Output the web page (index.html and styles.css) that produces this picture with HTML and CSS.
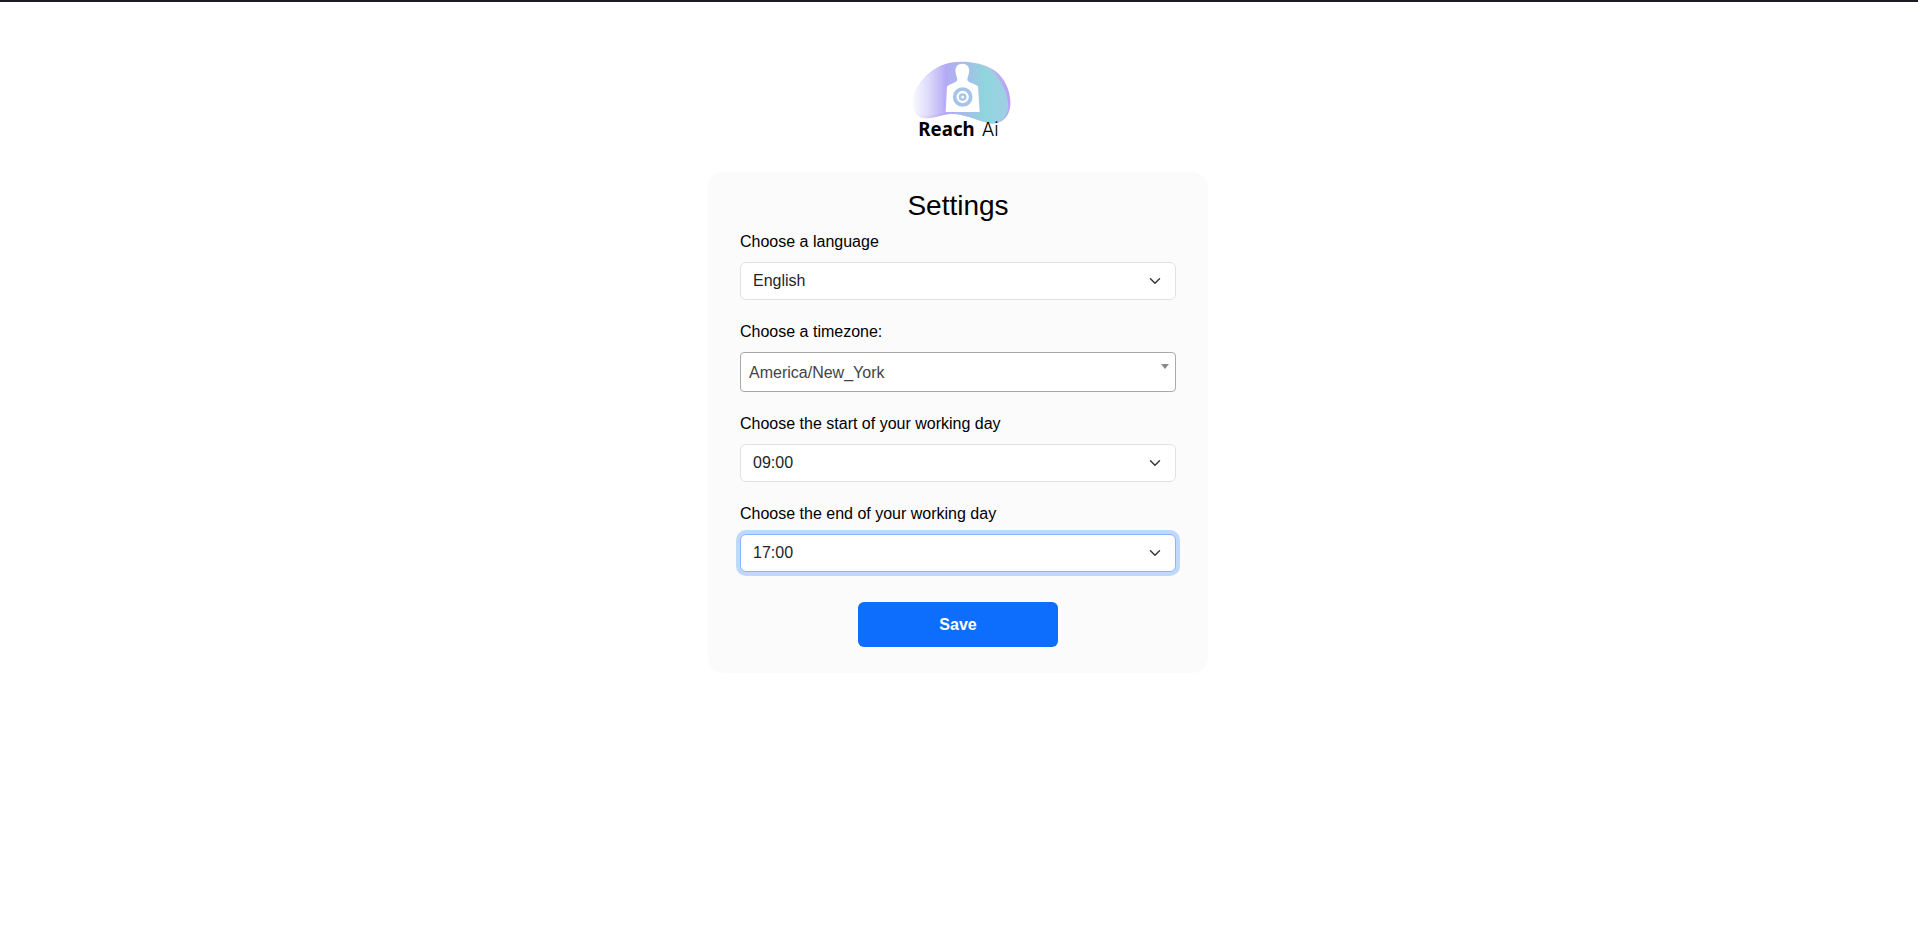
FILE: index.html
```
<!DOCTYPE html>
<html lang="en">
<head>
    <meta charset="UTF-8">
    <meta name="viewport" content="width=device-width, initial-scale=1.0">
    <title>Settings</title>
    <link rel="stylesheet" href="styles.css">
</head>
<body>
    <header class="header">
        <svg class="logo" viewBox="12 33 324 240" role="img" aria-label="Reach Ai">
            <defs>
                <linearGradient id="back" x1="0" y1="0" x2="1" y2="0">
                    <stop offset="0" stop-color="#fbfaff"/>
                    <stop offset="0.32" stop-color="#b3a5f3"/>
                    <stop offset="0.7" stop-color="#a9d0e4"/>
                    <stop offset="1" stop-color="#bd9bf8"/>
                </linearGradient>
                <linearGradient id="front" x1="0" y1="0" x2="1" y2="0">
                    <stop offset="0" stop-color="#f7f7fe"/>
                    <stop offset="0.15" stop-color="#dedcfb"/>
                    <stop offset="0.34" stop-color="#b5aaf4"/>
                    <stop offset="0.55" stop-color="#a5bee8"/>
                    <stop offset="0.75" stop-color="#90d5dc"/>
                    <stop offset="1" stop-color="#9fcfe4"/>
                </linearGradient>
            </defs>
            <path fill="url(#back)" d="M38 160C38 110 90 50 150 38C195 31 245 36 285 62C318 86 333 130 331 165C328 200 308 218 284 220C240 215 200 190 150 192C115 196 95 208 70 205C48 200 38 182 38 160Z"/>
            <path fill="url(#front)" d="M42 158C44 110 92 52 150 40C195 33 235 38 268 58C302 84 326 130 325 172C322 202 302 222 276 221C235 216 205 194 150 190C110 189 92 202 66 196C48 189 41 176 42 158Z"/>
            <path fill="#fff" d="M187 41C203 41 210 54 207 68C206 76 202 82 202 88C202 98 220 100 234 109L239 186H137L141 109C155 100 172 98 172 88C172 82 168 76 167 68C164 54 171 41 187 41Z"/>
            <circle cx="188" cy="141" r="24" fill="none" stroke="#a5c4e8" stroke-width="11"/>
            <circle cx="188" cy="141" r="8" fill="none" stroke="#a5c4e8" stroke-width="7"/>
            <text class="logo-bold" x="55" y="259">Reach</text>
            <text class="logo-light" x="245" y="259">Ai</text>
        </svg>
    </header>
    <main class="card">
        <h1>Settings</h1>
        <form>
            <label for="language">Choose a language</label>
            <select class="form-select" id="language" name="language">
                <option>English</option>
            </select>

            <label for="timezone">Choose a timezone:</label>
            <select class="timezone-select" id="timezone" name="timezone">
                <option>America/New_York</option>
            </select>

            <label for="start">Choose the start of your working day</label>
            <select class="form-select" id="start" name="start">
                <option>08:00</option>
                <option selected>09:00</option>
                <option>10:00</option>
            </select>

            <label for="end">Choose the end of your working day</label>
            <select class="form-select" id="end" name="end" autofocus>
                <option>16:00</option>
                <option selected>17:00</option>
                <option>18:00</option>
            </select>

            <button type="submit">Save</button>
        </form>
    </main>
</body>
</html>
```
FILE: styles.css
```
* {
    box-sizing: border-box;
}
body {
    margin: 0;
    padding-right: 2px;
    border-top: 2px solid #1f1b24;
    background-color: #fff;
    color: #000;
    font-family: "Liberation Sans", Arial, sans-serif;
    font-size: 16px;
    line-height: 24px;
}
.header {
    padding: 59px 0 31px;
    text-align: center;
}
.logo {
    display: block;
    width: 108px;
    height: 80px;
    margin: 0 auto;
}
.logo-bold {
    font-family: "Noto Sans", sans-serif;
    font-size: 56px;
    font-weight: 700;
}
.logo-light {
    font-family: Inter, sans-serif;
    font-size: 56px;
    font-weight: 300;
}
.card {
    max-width: 500px;
    margin: 0 auto;
    padding: 16px 32px 26px;
    border-radius: 16px;
    background-color: #fbfbfb;
}
h1 {
    margin: 0 0 6px;
    font-size: 28px;
    font-weight: 400;
    line-height: 36px;
    text-align: center;
}
label {
    display: block;
    margin-bottom: 8px;
}
select {
    display: block;
    width: 100%;
    margin-bottom: 20px;
    appearance: none;
    background-color: #fff;
    background-repeat: no-repeat;
    font-family: inherit;
    font-size: 16px;
    line-height: 24px;
}
.form-select {
    height: 38px;
    padding: 6px 36px 6px 12px;
    border: 1px solid #dee2e6;
    border-radius: 6px;
    background-image: url("data:image/svg+xml,%3Csvg xmlns='http://www.w3.org/2000/svg' viewBox='0 0 16 16'%3E%3Cpath fill='none' stroke='%23343a40' stroke-linecap='round' stroke-linejoin='round' stroke-width='2' d='m2 5 6 6 6-6'/%3E%3C/svg%3E");
    background-position: right 12px center;
    background-size: 16px 12px;
    color: #212529;
}
.form-select:focus {
    border-color: #86b7fe;
    outline: 0;
    box-shadow: 0 0 0 4px rgba(13, 110, 253, 0.25);
}
.timezone-select {
    height: 40px;
    padding: 8px 20px 6px 8px;
    border: 1px solid #aaa;
    border-radius: 4px;
    background-image: url("data:image/svg+xml,%3Csvg xmlns='http://www.w3.org/2000/svg' viewBox='0 0 8 5'%3E%3Cpath fill='%23888' d='M0 0h8L4 5z'/%3E%3C/svg%3E");
    background-position: right 6px top 11px;
    background-size: 8px 5px;
    color: #444;
}
button {
    display: block;
    width: 200px;
    height: 45px;
    margin: 30px auto 0;
    border: none;
    border-radius: 6px;
    background-color: #0d6efd;
    color: #fff;
    font-family: inherit;
    font-size: 16px;
    font-weight: 700;
    cursor: pointer;
}
```
